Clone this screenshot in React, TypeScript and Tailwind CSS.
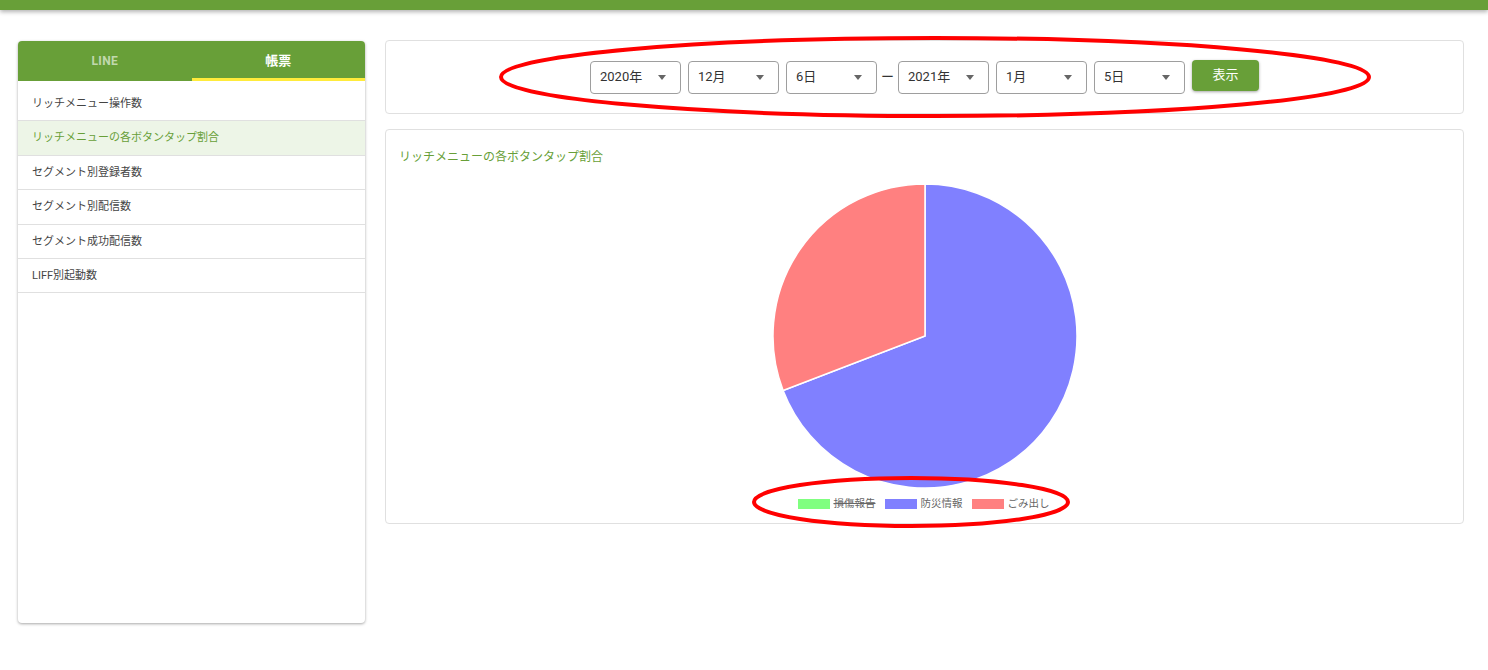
import React from "react";

const font = { fontFamily: "Roboto, 'Noto Sans CJK JP', sans-serif" };

const menu = [
  "リッチメニュー操作数",
  "リッチメニューの各ボタンタップ割合",
  "セグメント別登録者数",
  "セグメント別配信数",
  "セグメント成功配信数",
  "LIFF別起動数",
];

function Select({ label }: { label: string }) {
  return (
    <div className="flex h-[33px] w-[91px] items-center justify-between rounded border border-[#9e9e9e] pl-[9px] pr-[14px] text-[13px] text-[#333]">
      <span>{label}</span>
      <span className="h-0 w-0 border-x-[4px] border-t-[5px] border-x-transparent border-t-[#666]" />
    </div>
  );
}

function Pie() {
  // blue: 0 -> 249deg clockwise from top, red: the rest
  const cx = 152, cy = 152, r = 152;
  const a = (249 * Math.PI) / 180;
  const x = cx + r * Math.sin(a);
  const y = cy - r * Math.cos(a);
  return (
    <svg width="306" height="306" viewBox="-1 -1 306 306">
      <path d={`M${cx},${cy} L${cx},0 A${r},${r} 0 1 1 ${x},${y} Z`} fill="#8080ff" stroke="#fff" strokeWidth="1.5" />
      <path d={`M${cx},${cy} L${x},${y} A${r},${r} 0 0 1 ${cx},0 Z`} fill="#ff8080" stroke="#fff" strokeWidth="1.5" />
    </svg>
  );
}

function Legend({ color, label, off }: { color: string; label: string; off?: boolean }) {
  return (
    <div className="flex items-center gap-[4px]">
      <span className="h-[10px] w-[32px]" style={{ background: color }} />
      <span className={`text-[10.5px] text-[#666] ${off ? "line-through" : ""}`}>{label}</span>
    </div>
  );
}

export default function App() {
  return (
    <div className="relative h-[670px] w-[1488px] overflow-hidden bg-white" style={font}>
      <div className="h-[10px] bg-[#689f38] shadow-[0_2px_4px_rgba(0,0,0,0.3)]" />

      <div className="flex gap-[20px] pl-[18px] pr-[24px] pt-[30px]">
        {/* sidebar */}
        <div className="mt-px h-[582px] w-[347px] shrink-0 overflow-hidden rounded bg-white shadow-[0_1px_3px_rgba(0,0,0,0.35)]">
          <div className="flex h-[40px] bg-[#689f38]">
            <div className="flex flex-1 items-center justify-center text-[12px] font-bold tracking-wide text-white/60">LINE</div>
            <div className="flex flex-1 items-center justify-center border-b-[3px] border-[#ffeb3b] pt-[2px] text-[13px] font-bold text-white">帳票</div>
          </div>
          <div className="pt-[6px]">
            {menu.map((m, i) => (
              <div
                key={m}
                className={`flex h-[34.4px] items-center border-b border-[#e0e0e0] pl-[14px] pt-px text-[11px] ${
                  i === 1 ? "bg-[#edf5e7] text-[#689f38]" : "text-[#444]"
                }`}
              >
                {m}
              </div>
            ))}
          </div>
        </div>

        {/* main */}
        <div className="flex flex-1 flex-col gap-[15px]">
          <div className="flex h-[74px] items-center justify-center rounded border border-[#e0e0e0]">
            <div className="flex items-center gap-[7px]">
              <Select label="2020年" />
              <Select label="12月" />
              <Select label="6日" />
              <span className="flex w-[7px] justify-center text-[13px] text-[#333]">ー</span>
              <Select label="2021年" />
              <Select label="1月" />
              <Select label="5日" />
              <button className="h-[31px] w-[67px] -translate-y-[2px] rounded bg-[#689f38] text-[13px] text-white shadow-[0_1px_3px_rgba(0,0,0,0.35)]">
                表示
              </button>
            </div>
          </div>

          <div className="flex h-[395px] flex-col rounded border border-[#e0e0e0] px-[13px] pt-[18px]">
            <div className="text-[12px] text-[#689f38]">リッチメニューの各ボタンタップ割合</div>
            <div className="mt-[17px] flex justify-center">
              <Pie />
            </div>
            <div className="mt-[7px] flex justify-center gap-[9px] pr-[2px]">
              <Legend color="#80ff80" label="損傷報告" off />
              <Legend color="#8080ff" label="防災情報" />
              <Legend color="#ff8080" label="ごみ出し" />
            </div>
          </div>
        </div>
      </div>

      {/* annotation ellipses */}
      <svg className="pointer-events-none absolute left-0 top-0" width="1488" height="670">
        <ellipse cx="935" cy="77" rx="434" ry="39" fill="none" stroke="#ff0000" strokeWidth="4" />
        <ellipse cx="911" cy="502" rx="157" ry="24" fill="none" stroke="#ff0000" strokeWidth="4" />
      </svg>
    </div>
  );
}
